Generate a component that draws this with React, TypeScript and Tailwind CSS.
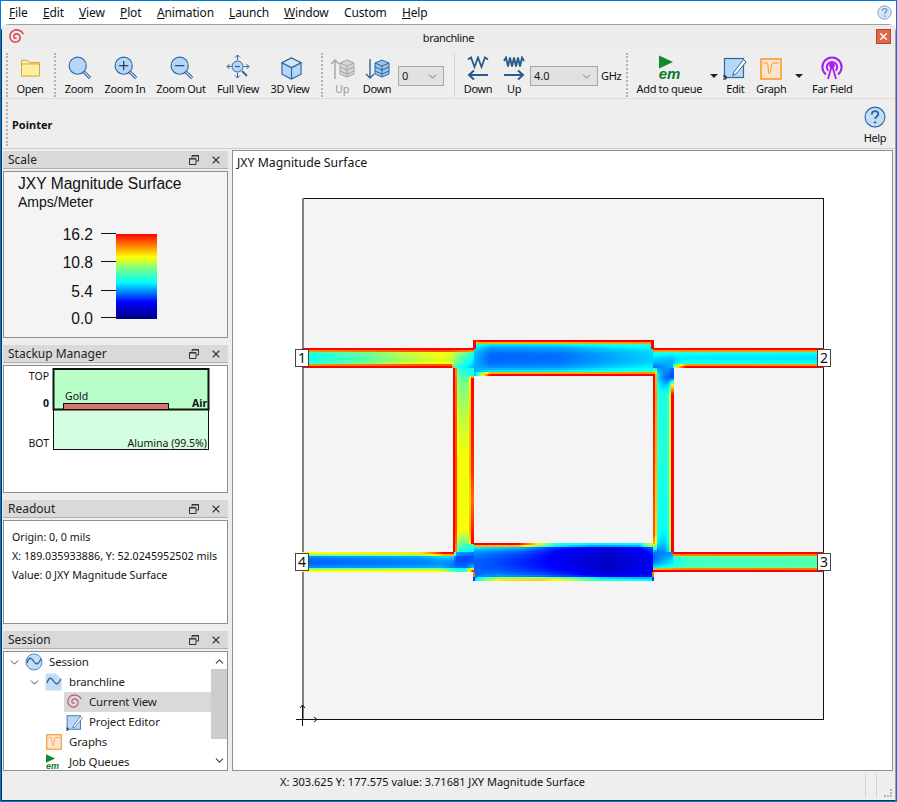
import { useMemo, type ReactNode } from 'react';
import { ChevronDown, ChevronUp, X } from 'lucide-react';

type Stops = [number, number][];

// legend colours, same stops as the scale bar
const colorStops: [number, number[]][] = [
  [0, [0, 0, 128]],
  [0.2, [0, 0, 255]],
  [0.43, [0, 255, 255]],
  [0.6, [128, 255, 128]],
  [0.73, [255, 255, 0]],
  [1, [255, 0, 0]],
];

function colorFor(v: number) {
  const t = Math.min(1, Math.max(0, v));
  for (let i = 1; i < colorStops.length; i++) {
    const [p1, c1] = colorStops[i];
    if (t <= p1) {
      const [p0, c0] = colorStops[i - 1];
      const k = (t - p0) / (p1 - p0);
      return `rgb(${c0.map((c, j) => Math.round(c + (c1[j] - c) * k)).join(',')})`;
    }
  }
  return 'rgb(255,0,0)';
}

function at(stops: Stops, s: number) {
  if (s <= stops[0][0]) return stops[0][1];
  for (let i = 1; i < stops.length; i++) {
    if (s <= stops[i][0]) {
      const [a, va] = stops[i - 1];
      const [b, vb] = stops[i];
      return va + ((vb - va) * (s - a)) / (b - a);
    }
  }
  return stops[stops.length - 1][1];
}

const falloff = (d: number) => Math.min(1, Math.max(1.6 - d / 3.5, 0.5 * Math.exp(-d / 5)));

type Segment = {
  x0: number;
  x1: number;
  y0: number;
  y1: number;
  vertical?: boolean;
  center: Stops;
  a: Stops;
  b: Stops;
};

const segments: Segment[] = [
  // left and right branches
  {
    x0: 453, x1: 474, y0: 368, y1: 552, vertical: true,
    center: [[368, 0.42], [385, 0.53], [420, 0.62], [460, 0.68], [530, 0.68], [545, 0.5], [552, 0.4]],
    a: [[368, 1], [552, 1]],
    b: [[368, 0.45], [375, 0.45], [378, 1], [470, 0.95], [500, 0.88], [543, 1], [545, 0.5], [552, 0.4]],
  },
  {
    x0: 653, x1: 674, y0: 368, y1: 552, vertical: true,
    center: [[368, 0.33], [378, 0.27], [395, 0.38], [450, 0.4], [530, 0.36], [552, 0.28]],
    a: [[368, 0.4], [375, 1], [535, 0.9], [543, 0.8], [552, 0.3]],
    b: [[368, 0.3], [378, 0.25], [385, 0.7], [395, 1], [552, 1]],
  },
  // top run
  {
    x0: 302, x1: 474, y0: 348, y1: 368,
    center: [[302, 0.34], [360, 0.46], [400, 0.58], [440, 0.66], [453, 0.62], [474, 0.38]],
    a: [[302, 1], [474, 1]],
    b: [[302, 1], [452, 1], [455, 0.5], [474, 0.36]],
  },
  {
    x0: 474, x1: 653, y0: 340, y1: 376,
    center: [[474, 0.36], [490, 0.27], [560, 0.28], [610, 0.33], [653, 0.37]],
    a: [[474, 0.9], [480, 1], [653, 1]],
    b: [[474, 0.35], [480, 0.6], [490, 1], [653, 1]],
  },
  {
    x0: 653, x1: 824, y0: 348, y1: 368,
    center: [[653, 0.36], [690, 0.32], [824, 0.31]],
    a: [[653, 1], [824, 1]],
    b: [[653, 0.3], [672, 0.35], [676, 0.7], [686, 1], [824, 1]],
  },
  // bottom run
  {
    x0: 302, x1: 474, y0: 552, y1: 572,
    center: [[302, 0.22], [440, 0.26], [474, 0.24]],
    a: [[302, 0.72], [420, 0.75], [432, 0.85], [445, 1], [453, 1], [456, 0.35], [474, 0.3]],
    b: [[302, 0.72], [440, 0.72], [456, 0.5], [465, 0.5], [474, 1]],
  },
  {
    x0: 474, x1: 653, y0: 543, y1: 581,
    center: [[474, 0.28], [540, 0.2], [610, 0.1], [653, 0.18]],
    a: [[474, 1], [518, 1], [535, 0.78], [555, 0.5], [590, 0.42], [640, 0.43], [651, 0.75]],
    b: [[474, 0.38], [485, 0.6], [500, 0.75], [540, 0.78], [570, 0.68], [600, 0.5], [653, 0.42]],
  },
  {
    x0: 653, x1: 824, y0: 552, y1: 572,
    center: [[653, 0.26], [670, 0.36], [690, 0.43], [824, 0.46]],
    a: [[653, 0.3], [672, 0.32], [674, 1], [824, 1]],
    b: [[653, 1], [824, 1]],
  },
];

const ports = [
  { label: '1', x: 295, y: 349 },
  { label: '2', x: 817, y: 349 },
  { label: '3', x: 817, y: 553 },
  { label: '4', x: 295, y: 553 },
];

const spiralPath = (() => {
  let d = '';
  for (let t = 0; t <= 11.5; t += 0.4) {
    const r = 1 + t * 0.85;
    const x = 12 + r * Math.cos(t + 1);
    const y = 12 + r * Math.sin(t + 1);
    d += `${t === 0 ? 'M' : 'L'}${x.toFixed(1)} ${y.toFixed(1)} `;
  }
  return d;
})();

function Spiral({ size = 18, color = '#d9434a', weight = 2 }: { size?: number; color?: string; weight?: number }) {
  return (
    <svg width={size} height={size} viewBox="0 0 24 24" fill="none" stroke={color} strokeWidth={weight}>
      <path d={spiralPath} />
    </svg>
  );
}

function HelpIcon({ size }: { size: number }) {
  return (
    <svg width={size} height={size} viewBox="0 0 24 24">
      <circle cx="12" cy="12" r="10.8" fill="#c3ddf6" stroke="#2f669e" strokeWidth="1.2" />
      <path d="M8.5 9.2c0-2.3 1.6-3.6 3.6-3.6s3.5 1.2 3.5 3.1c0 2.7-3.5 2.8-3.5 5.6" fill="none" stroke="#2f669e" strokeWidth="2" />
      <circle cx="12.1" cy="17.8" r="1.3" fill="#2f669e" />
    </svg>
  );
}

function Magnifier({ mark }: { mark?: 'plus' | 'minus' }) {
  return (
    <svg width="24" height="24" viewBox="0 0 26 26" fill="none" className="ml-[2px]">
      <path d="M16 16l8 8" stroke="#2f669e" strokeWidth="3.4" />
      <path d="M16 16l8 8" stroke="#c3ddf6" strokeWidth="1.4" />
      <circle cx="10.5" cy="10.5" r="9.3" fill="#b5d6f8" stroke="#2f669e" strokeWidth="1.2" />
      {mark && <path d="M5.5 10.5h10" stroke="#1d3f66" strokeWidth="1.3" />}
      {mark === 'plus' && <path d="M10.5 5.5v10" stroke="#1d3f66" strokeWidth="1.3" />}
    </svg>
  );
}

function FolderIcon() {
  return (
    <svg width="21" height="18" viewBox="0 0 22 20" className="mb-[3px]">
      <path d="M1 4V1.5h7L10 4h11v15H1z" fill="#fdf0a0" stroke="#c9a227" />
      <path d="M1 5.5h20" stroke="#c9a227" />
    </svg>
  );
}

function FullViewIcon() {
  return (
    <svg width="24" height="26" viewBox="0 0 24 26" fill="none" stroke="#2f669e">
      <circle cx="11.5" cy="12.5" r="5.5" fill="#b5d6f8" />
      <path d="M9 12.5h5" strokeWidth="1.2" />
      <path d="M16 17l5 5" strokeWidth="2" />
      <path d="M11.5 6V1M9 3.5L11.5 1 14 3.5M11.5 19v5M9 21.5l2.5 2.5 2.5-2.5M5.5 12.5H1M3.5 10L1 12.5 3.5 15M17.5 12.5H23M20.5 10l2.5 2.5-2.5 2.5" />
    </svg>
  );
}

function CubeIcon() {
  return (
    <svg width="21" height="23" viewBox="0 0 22 24" stroke="#2f669e" strokeWidth="1.2" className="ml-[2px]">
      <path d="M11 1l10 5v12l-10 5-10-5V6z" fill="#b5d6f8" />
      <path d="M1 6l10 5 10-5M11 11v12" fill="none" />
      <path d="M11 1l10 5-10 5L1 6z" fill="#d3e7fb" />
    </svg>
  );
}

function LayersIcon({ up }: { up?: boolean }) {
  const stroke = up ? '#a6a6a6' : '#2f669e';
  const fill = up ? '#d6d6d6' : '#9cc5ee';
  return (
    <svg width="25" height="22" viewBox="0 0 25 22" fill="none" stroke={stroke}>
      {up ? <path d="M5 21V2M1 6l4-4 4 4" strokeWidth="1.4" /> : <path d="M5 1v19M1 16l4 4 4-4" strokeWidth="1.4" />}
      <path d="M10 5l7-3 7 3v11l-7 3-7-3z" fill={fill} />
      <path d="M10 5l7 3 7-3M10 9l7 3 7-3M10 13l7 3 7-3M17 8v11" />
    </svg>
  );
}

function WaveIcon({ dense }: { dense?: boolean }) {
  return (
    <svg width="22" height="24" viewBox="0 0 22 24" fill="none" stroke="#2a5a8c" strokeWidth="1.8">
      {dense ? (
        <path d="M1 5L3 1.5 5 10.5 7 1.5 9 10.5 11 1.5 13 10.5 15 1.5 17 10.5 19 1.5 21 5" />
      ) : (
        <path d="M1 3.5L4 1.5 7.5 11 11 1.5 14.5 11 18 1.5 21 3.5" />
      )}
      {dense ? <path d="M1 19h19M15 14.5l5 4.5-5 4.5" strokeWidth="2" /> : <path d="M21 19H2M7 14.5L2 19l5 4.5" strokeWidth="2" />}
    </svg>
  );
}

function EmIcon({ small }: { small?: boolean }) {
  return (
    <span className={small ? 'flex flex-col items-start w-[16px] h-[16px] leading-none' : 'flex flex-col items-start w-[24px] h-[25px] ml-[3px] leading-none'}>
      <svg width={small ? 9 : 14} height={small ? 9 : 14} viewBox="0 0 15 14">
        <path d="M0 0l15 7-15 7z" fill="#0f8a2d" />
      </svg>
      <span className={small ? "font-['Liberation_Sans',sans-serif] italic font-bold text-[9px] leading-[7px] text-[#0f7a2a]" : "font-['Liberation_Sans',sans-serif] italic font-bold text-[15px] leading-[9px] text-[#0f7a2a]"}>
        em
      </span>
    </span>
  );
}

function EditIcon({ size = 24 }: { size?: number }) {
  return (
    <svg width={size} height={size} viewBox="0 0 24 24" fill="none">
      <rect x="1.5" y="2.5" width="19" height="19" fill="#b8d7f7" stroke="#2f669e" strokeWidth="1.2" />
      <path d="M11 16l-1.5 3.500L13 18 23 6l-2.500-2.500z" fill="#fff" stroke="#2f669e" />
      <path d="M0 20h3v3M3 23h-3" stroke="#111" strokeWidth="1" />
    </svg>
  );
}

function GraphIcon({ size = 22 }: { size?: number }) {
  return (
    <svg width={size} height={size} viewBox="0 0 22 22" fill="none">
      <rect x="1" y="1" width="20" height="20" fill="#fde4cc" stroke="#fb9a2d" strokeWidth="1.6" />
      <path d="M3 5h4c1.5 0 1 11 2.500 11S11 5 13 5h6" stroke="#fb9a2d" strokeWidth="1" />
    </svg>
  );
}

function FarFieldIcon() {
  return (
    <svg width="24" height="24" viewBox="0 0 24 24" fill="none" stroke="#a81df0" strokeWidth="2">
      <path d="M6 18.5a9.6 9.6 0 1 1 12 0" />
      <path d="M8.3 14.8a5.2 5.2 0 1 1 7.4 0" />
      <path d="M12 9l-4 14M12 9l4 14" strokeWidth="1.8" />
      <circle cx="12" cy="9.5" r="1.8" fill="#a81df0" />
    </svg>
  );
}

function SessionIcon({ doc }: { doc?: boolean }) {
  return (
    <svg width="18" height="18" viewBox="0 0 18 18" fill="none">
      {doc ? (
        <path d="M1 1h10l5 5v11H1z" fill="#c3ddf6" stroke="#c3ddf6" />
      ) : (
        <circle cx="9" cy="9" r="8" fill="#c3ddf6" stroke="#4f86bd" />
      )}
      <path d="M2 10c2-6 4-6 6.500-2s4.500 4 7.500-2" stroke="#2f669e" strokeWidth="1.4" />
    </svg>
  );
}

function ToolButton({ width, label, icon, disabled }: { width: string; label: string; icon: ReactNode; disabled?: boolean }) {
  return (
    <div className={`${width} shrink-0 flex flex-col items-center`}>
      <div className="h-[33px] flex items-end justify-center pb-[1px]">{icon}</div>
      <span className={disabled ? 'text-[11px] leading-[16px] tracking-[-0.35px] whitespace-nowrap text-[#9a9a9a]' : 'text-[11px] leading-[16px] tracking-[-0.35px] whitespace-nowrap'}>{label}</span>
    </div>
  );
}

function Handle({ className }: { className: string }) {
  return <div className={`w-[2px] shrink-0 border-l-2 border-dotted border-[#b4b4b4] ${className}`} />;
}

function SelectBox({ width, value }: { width: string; value: string }) {
  return (
    <div className={`${width} h-[20px] shrink-0 flex items-center justify-between pl-[3px] pr-[4px] bg-[#e1e1e1] border border-[#a9a9a9] text-[11px]`}>
      <span>{value}</span>
      <ChevronDown size={13} strokeWidth={1.2} className="text-[#444]" />
    </div>
  );
}

function DropArrow({ className }: { className: string }) {
  return <div className={`shrink-0 w-0 h-0 border-x-[4px] border-x-transparent border-t-[4px] border-t-[#222] ${className}`} />;
}

function Dock({ title, bodyClass, children }: { title: string; bodyClass: string; children: ReactNode }) {
  return (
    <section className="flex flex-col gap-[2px]">
      <div className="h-[18px] flex items-center justify-between bg-[#d9d9d9] border-b border-[#b0b0b0] pl-[5px] pr-[6px] text-[12px] text-[#222]">
        <span className="pt-[1px]">{title}</span>
        <span className="flex items-center gap-[11px]">
          <svg width="10" height="10" viewBox="0 0 10 10" fill="none" stroke="#333">
            <path d="M3 2.500V.5h6.500V6H7.500M.5 3.500h6.500V9.500H.5z" />
            <path d="M.5 4h6.500M3 1h6.500" />
          </svg>
          <X size={12} strokeWidth={2.2} className="text-[#333]" />
        </span>
      </div>
      <div className={`border border-[#8f8f8f] ${bodyClass}`}>{children}</div>
    </section>
  );
}

function TreeRow({ indent, chevron, icon, label, active }: { indent: string; chevron?: boolean; icon: ReactNode; label: string; active?: boolean }) {
  return (
    <div className={`h-[20px] flex items-center shrink-0 ${indent}`}>
      <div className="w-[20px] shrink-0 flex justify-center">{chevron && <ChevronDown size={13} strokeWidth={1.8} className="text-[#444]" />}</div>
      <div className={active ? 'flex-1 h-full flex items-center bg-[#d9d9d9]' : 'flex-1 h-full flex items-center'}>
        <div className="w-[20px] shrink-0 flex justify-center">{icon}</div>
        <span className="ml-[5px] whitespace-nowrap tracking-[-0.15px]">{label}</span>
      </div>
    </div>
  );
}

function FieldPlot() {
  const cells = useMemo(() => {
    const out: { x: number; y: number; w: number; h: number; fill: string }[] = [];
    for (const seg of segments) {
      for (let x = seg.x0; x < seg.x1; x += 2) {
        for (let y = seg.y0; y < seg.y1; y += 2) {
          const w = Math.min(2, seg.x1 - x);
          const h = Math.min(2, seg.y1 - y);
          const cx = x + w / 2;
          const cy = y + h / 2;
          const s = seg.vertical ? cy : cx;
          const da = seg.vertical ? cx - seg.x0 : cy - seg.y0;
          const db = seg.vertical ? seg.x1 - cx : seg.y1 - cy;
          const c = at(seg.center, s);
          const v = c + (at(seg.a, s) - c) * falloff(da) + (at(seg.b, s) - c) * falloff(db);
          out.push({ x, y, w, h, fill: colorFor(v) });
        }
      }
    }
    return out;
  }, []);

  return (
    <svg width="659" height="597" viewBox="233 172 659 597" className="block font-['Noto_Sans',sans-serif]">
      <rect x="302.500" y="198.500" width="521" height="521" fill="#f4f4f4" stroke="#111" />
      <path d="M303 198v522" stroke="#808080" strokeWidth="2" />
      <g shapeRendering="crispEdges">
        {cells.map((c, i) => (
          <rect key={i} x={c.x} y={c.y} width={c.w} height={c.h} fill={c.fill} />
        ))}
        <rect x="473" y="340" width="3" height="9" fill="#ff0000" />
        <rect x="651" y="340" width="3" height="9" fill="#ff0000" />
        <rect x="473" y="572" width="2" height="5" fill="#ff7000" />
        <rect x="473" y="577" width="2" height="4" fill="#0040ff" />
        <rect x="652" y="572" width="2" height="5" fill="#ff7000" />
        <rect x="652" y="577" width="2" height="4" fill="#0040ff" />
      </g>
      <path d="M302.500 705v21M296 719.500h21M300 708l2.500-3 2.500 3M314 717l3 2.500-3 2.500" fill="none" stroke="#111" />
      {ports.map((p) => (
        <g key={p.label}>
          <rect x={p.x + 0.5} y={p.y + 0.5} width="13" height="17" fill="#fff" stroke="#444" />
          <text x={p.x + 7} y={p.y + 14} textAnchor="middle" fontSize="14" fill="#111">
            {p.label}
          </text>
        </g>
      ))}
    </svg>
  );
}

function ScaleLegend() {
  const ticks = [
    { y: 233.5, label: '16.2' },
    { y: 261.5, label: '10.8' },
    { y: 290.5, label: '5.4' },
    { y: 317.5, label: '0.0' },
  ];
  return (
    <svg width="160" height="108" viewBox="4 222 160 108" className="block font-['Liberation_Sans',sans-serif]">
      <defs>
        <linearGradient id="scale" x1="0" y1="1" x2="0" y2="0">
          {colorStops.map(([p, c]) => (
            <stop key={p} offset={p} stopColor={`rgb(${c.join(',')})`} />
          ))}
        </linearGradient>
      </defs>
      <rect x="116" y="234" width="41" height="85" fill="url(#scale)" />
      {ticks.map((t) => (
        <g key={t.label}>
          <path d={`M101 ${t.y}h15`} stroke="#111" />
          <text x="93" y={t.y + 6} textAnchor="end" fontSize="15.6" fill="#111">
            {t.label}
          </text>
        </g>
      ))}
    </svg>
  );
}

function StackupDiagram() {
  return (
    <svg width="223" height="126" viewBox="4 366 223 126" className="block bg-white font-['Noto_Sans',sans-serif]" fontSize="10.5" fill="#111">
      <rect x="53.500" y="409.500" width="155" height="40" fill="#d5fde0" stroke="#111" />
      <path d="M53.500 409.500V369h155v40.500z" fill="#b9fdc9" stroke="#111" strokeWidth="2" />
      <rect x="63.500" y="403.500" width="105" height="6" fill="#d9736e" stroke="#111" />
      <text x="49" y="380" textAnchor="end">TOP</text>
      <text x="49" y="407" textAnchor="end" fontWeight="700">0</text>
      <text x="65" y="400">Gold</text>
      <svg x="180" y="395" width="27.500" height="14" viewBox="180 395 27.500 14">
        <text x="192" y="407" fontWeight="700">Air</text>
      </svg>
      <text x="49" y="447" textAnchor="end">BOT</text>
      <text x="207" y="447" textAnchor="end">Alumina (99.5%)</text>
    </svg>
  );
}

const menus = [
  { first: 'F', rest: 'ile', width: 'w-[34px]' },
  { first: 'E', rest: 'dit', width: 'w-[36px]' },
  { first: 'V', rest: 'iew', width: 'w-[41px]' },
  { first: 'P', rest: 'lot', width: 'w-[37px]' },
  { first: 'A', rest: 'nimation', width: 'w-[72px]' },
  { first: 'L', rest: 'aunch', width: 'w-[55px]' },
  { first: 'W', rest: 'indow', width: 'w-[60px]' },
  { first: '', rest: 'Custom', width: 'w-[58px]' },
  { first: 'H', rest: 'elp', width: 'w-[40px]' },
];

export default function App() {
  return (
    <div className="w-[897px] h-[802px] flex flex-col bg-white border border-[#0078d7] font-['Noto_Sans',sans-serif] text-[#111] overflow-hidden">
      {/* Menu bar */}
      <header className="h-[23px] shrink-0 flex items-center pl-[8px] pr-[4px] text-[12px] tracking-[-0.15px]">
        {menus.map((m) => (
          <span key={m.rest} className={`${m.width} shrink-0`}>
            {m.first && <span className="underline">{m.first}</span>}
            {m.rest}
          </span>
        ))}
        <span className="ml-auto opacity-70">
          <HelpIcon size={15} />
        </span>
      </header>

      {/* Sub window */}
      <div className="flex-1 min-h-0 flex flex-col bg-[#eeeeee] border border-[#a0a0a0] border-l-[#12304f] border-b-[#12304f] rounded-t-lg">
        <div className="h-[23px] shrink-0 flex items-center relative pl-[5px] pr-[4px] bg-[#ececec]">
          <Spiral />
          <span className="flex-1 text-center text-[11px] tracking-[-0.35px] pt-[3px] pr-[4px]">branchline</span>
          <span className="w-[15px] h-[15px] flex items-center justify-center bg-[#e2654c] border border-[#b5452f]">
            <X size={11} strokeWidth={3.2} className="text-white" />
          </span>
        </div>

        {/* Main toolbar */}
        <div className="h-[51px] shrink-0 flex items-start border-b border-[#dcdcdc] pl-[4px]">
          <Handle className="h-[44px] mt-[5px]" />
          <ToolButton width="w-[44px]" label="Open" icon={<FolderIcon />} />
          <Handle className="h-[44px] mt-[5px] ml-[2px]" />
          <ToolButton width="w-[46px]" label="Zoom" icon={<Magnifier />} />
          <ToolButton width="w-[46px]" label="Zoom In" icon={<Magnifier mark="plus" />} />
          <ToolButton width="w-[66px]" label="Zoom Out" icon={<Magnifier mark="minus" />} />
          <ToolButton width="w-[48px]" label="Full View" icon={<FullViewIcon />} />
          <ToolButton width="w-[56px]" label="3D View" icon={<CubeIcon />} />
          <Handle className="h-[44px] mt-[5px] ml-[3px] mr-[2px]" />
          <ToolButton width="w-[34px]" label="Up" icon={<LayersIcon up />} disabled />
          <ToolButton width="w-[36px]" label="Down" icon={<LayersIcon />} />
          <SelectBox width="w-[46px] ml-[3px] mt-[18px]" value="0" />
          <div className="w-px h-[44px] mt-[5px] ml-[10px] mr-[5px] shrink-0 bg-[#d4d4d4]" />
          <ToolButton width="w-[36px]" label="Down" icon={<WaveIcon />} />
          <ToolButton width="w-[36px] -mr-[2px]" label="Up" icon={<WaveIcon dense />} />
          <SelectBox width="w-[68px] mt-[18px]" value="4.0" />
          <span className="ml-[3px] mt-[20px] text-[11px] leading-[16px] tracking-[-0.35px] shrink-0">GHz</span>
          <Handle className="h-[44px] mt-[5px] ml-[5px]" />
          <ToolButton width="w-[72px] ml-[5px]" label="Add to queue" icon={<EmIcon />} />
          <DropArrow className="mt-[26px] ml-[5px]" />
          <ToolButton width="w-[30px] ml-[2px]" label="Edit" icon={<EditIcon />} />
          <ToolButton width="w-[36px] ml-[3px]" label="Graph" icon={<GraphIcon />} />
          <DropArrow className="mt-[26px] ml-[6px]" />
          <ToolButton width="w-[50px] ml-[4px]" label="Far Field" icon={<FarFieldIcon />} />
        </div>

        {/* Pointer toolbar */}
        <div className="h-[50px] shrink-0 flex items-center border-b border-[#cfcfcf] pl-[4px] pr-[5px]">
          <Handle className="h-[44px]" />
          <span className="ml-[4px] mt-[4px] font-bold text-[11px]">Pointer</span>
          <div className="ml-auto mt-[5px] w-[30px] flex flex-col items-center">
            <HelpIcon size={22} />
            <span className="text-[11px] leading-[16px] tracking-[-0.35px] mt-[2px]">Help</span>
          </div>
        </div>

        <div className="flex-1 min-h-0 flex pt-[1px]">
          {/* Dock column */}
          <aside className="w-[225px] shrink-0 ml-[1px] mt-[1px] flex flex-col gap-[7px]">
            <Dock title="Scale" bodyClass="h-[167px] bg-[#f4f4f4] pl-[14px] pt-[2px] font-['Liberation_Sans',sans-serif]">
              <div className="text-[15.600px] leading-[19px] text-[#111] whitespace-nowrap">JXY Magnitude Surface</div>
              <div className="text-[14px] leading-[18px] text-[#111]">Amps/Meter</div>
              <div className="-ml-[14px] mt-[11px]">
                <ScaleLegend />
              </div>
            </Dock>
            <Dock title="Stackup Manager" bodyClass="h-[128px] bg-white">
              <StackupDiagram />
            </Dock>
            <Dock title="Readout" bodyClass="h-[104px] bg-white pl-[8px] pt-[7px] text-[10.700px] leading-[19px]">
              <div>Origin: 0, 0 mils</div>
              <div className="whitespace-nowrap">X: 189.035933886, Y: 52.0245952502 mils</div>
              <div>Value: 0 JXY Magnitude Surface</div>
            </Dock>
            <Dock title="Session" bodyClass="h-[120px] bg-white flex overflow-hidden">
              <div className="flex-1 min-w-0 flex flex-col text-[11.500px] text-[#222]">
                <TreeRow indent="" chevron icon={<SessionIcon />} label="Session" />
                <TreeRow indent="pl-[20px]" chevron icon={<SessionIcon doc />} label="branchline" />
                <TreeRow indent="pl-[40px]" icon={<Spiral size={18} color="#b05a70" weight={1.5} />} label="Current View" active />
                <TreeRow indent="pl-[40px]" icon={<EditIcon size={17} />} label="Project Editor" />
                <TreeRow indent="pl-[20px]" icon={<GraphIcon size={16} />} label="Graphs" />
                <TreeRow indent="pl-[20px]" icon={<EmIcon small />} label="Job Queues" />
              </div>
              <div className="w-[16px] shrink-0 flex flex-col items-center bg-white">
                <ChevronUp size={13} strokeWidth={2} className="text-[#444] mt-[3px] shrink-0" />
                <div className="w-full h-[70px] mt-[1px] bg-[#cdcdcd] shrink-0" />
                <ChevronDown size={13} strokeWidth={2} className="text-[#444] mt-auto mb-[3px] shrink-0" />
              </div>
            </Dock>
          </aside>

          {/* Plot view */}
          <main className="w-[661px] ml-[4px] shrink-0 bg-white border border-[#8f8f8f] flex flex-col">
            <div className="h-[21px] shrink-0 pl-[4px] pt-[4px] text-[12.300px] leading-[16px]">JXY Magnitude Surface</div>
            <FieldPlot />
          </main>
        </div>

        {/* Status bar */}
        <footer className="h-[29px] shrink-0 flex items-center pl-[278px] text-[11px] relative">
          <span className="whitespace-nowrap -mt-[6px]">X: 303.625 Y: 177.575 value: 3.71681 JXY Magnitude Surface</span>
          <span className="ml-auto w-px h-[24px] bg-[#d4d4d4]" />
          <span className="ml-[10px] w-px h-[24px] bg-[#d4d4d4] mr-[18px]" />
          <span className="absolute right-[3px] bottom-[3px] w-[8px] h-[8px] border-r-2 border-b-2 border-dotted border-[#b4b4b4]" />
        </footer>
      </div>
    </div>
  );
}
